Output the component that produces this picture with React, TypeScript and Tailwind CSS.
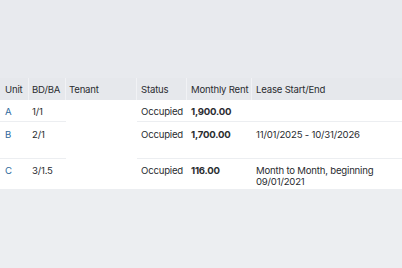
import React from "react";

type Unit = {
  unit: string;
  beds: string;
  status: string;
  rent: string;
  lease: string;
  h: string;
};

const units: Unit[] = [
  { unit: "A", beds: "1/1", status: "Occupied", rent: "1,900.00", lease: "", h: "h-[22px] pt-[6px]" },
  { unit: "B", beds: "2/1", status: "Occupied", rent: "1,700.00", lease: "11/01/2025 - 10/31/2026", h: "h-[37px] pt-[7px]" },
  { unit: "C", beds: "3/1.5", status: "Occupied", rent: "116.00", lease: "Month to Month, beginning 09/01/2021", h: "h-[30px] pt-[6px]" },
];

const head = ["Unit", "BD/BA", "Tenant", "Status", "Monthly Rent", "Lease Start/End"];

export default function App() {
  return (
    <div
      className="w-[402px] h-[268px] bg-[#e8eaee] flex flex-col text-[9.6px] tracking-[-0.2px] leading-[11px] text-[#2a2c30]"
      style={{ fontFamily: "Inter, 'Noto Sans', sans-serif" }}
    >
      <div className="h-[78px]" />
      <div className="grid grid-cols-[29px_37px_71px_50px_65px_1fr]">
        {head.map((h, i) => (
          <div
            key={h}
            className={`h-[22px] flex items-center whitespace-nowrap bg-[#e6e8ec] ${i === 0 ? "pl-[5px]" : i < 3 ? "pl-[3px]" : "pl-[4px]"} ${i < head.length - 1 ? "border-r border-[#f1f2f5]" : ""}`}
          >
            {h}
          </div>
        ))}
        {units.map((u, r) => {
          const line = r < units.length - 1 ? "border-b border-[#eceef1]" : "";
          return (
            <React.Fragment key={u.unit}>
              <div className={`bg-white pl-[5px] text-[#2f6a9c] ${u.h} ${line}`}>{u.unit}</div>
              <div className={`bg-white pl-[3px] ${u.h} ${line}`}>{u.beds}</div>
              <div className={`bg-white ${u.h}`} />
              <div className={`bg-white pl-[4px] ${u.h} ${line}`}>{u.status}</div>
              <div className={`bg-white pl-[4px] font-bold ${u.h} ${line}`}>{u.rent}</div>
              <div className={`bg-white pl-[4px] pr-[20px] ${u.h} ${line}`}>{u.lease}</div>
            </React.Fragment>
          );
        })}
      </div>
      <div className="flex-1 bg-[#eceef1]" />
    </div>
  );
}
